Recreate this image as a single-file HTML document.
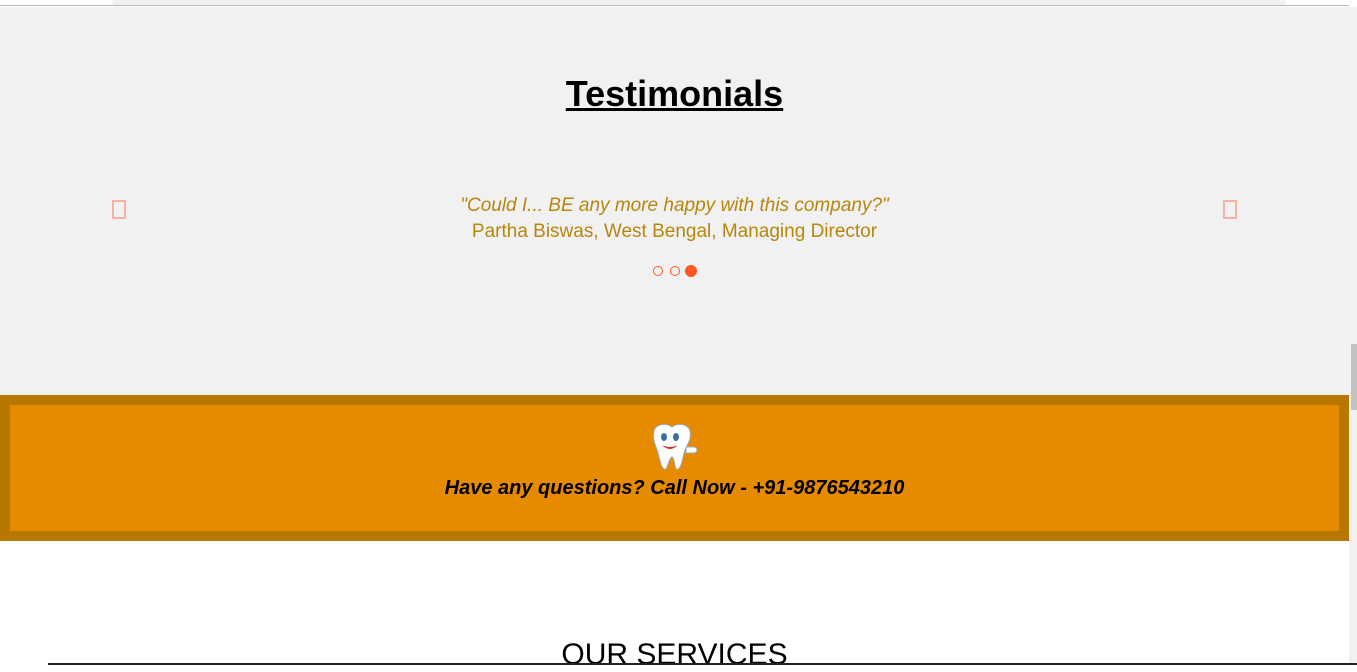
<!DOCTYPE html>
<html><head><style>
*{margin:0;padding:0;box-sizing:border-box}
body{width:1357px;height:665px;overflow:hidden;background:#fff;font-family:"Liberation Sans",Arial,sans-serif;position:relative}
.top{position:absolute;left:0;top:0;width:1349px;height:6px;background:#fff;border-bottom:1px solid #b5b5b5}
.top .bar{position:absolute;left:113px;top:0;width:1172px;height:3px;background:#f2f2f2;box-shadow:0 1px 2px #ddd}
.grey{position:absolute;left:0;top:7px;width:1349px;height:388px;background:#f1f1f1}
h2{position:absolute;left:0;width:1349px;top:73px;text-align:center;font-size:36px;font-weight:bold;text-decoration:underline;color:#000}
.q{position:absolute;left:0;width:1349px;top:195px;text-align:center;font-size:19px;font-style:italic;color:#b8860b}
.n{position:absolute;left:0;width:1349px;top:221px;text-align:center;font-size:19px;color:#b8860b}
.arr{position:absolute;top:200px;width:14px;height:19px;border:2px solid #f5a48e;opacity:.8}
.dot{position:absolute;top:266px;width:10px;height:10px;border:1px solid #ff5722;border-radius:50%}
.band{position:absolute;left:0;top:395px;width:1349px;height:146px;background:#b87800;padding:10px}
.band .in{width:100%;height:100%;background:#e68a00;position:relative}
.call{position:absolute;left:0;width:100%;top:72px;text-align:center;font-size:20px;font-weight:bold;font-style:italic;color:#000}
.svc{position:absolute;left:0;width:1349px;top:638px;text-align:center;font-size:30px;color:#000}
.sb{position:absolute;left:1349px;top:7px;width:8px;height:658px;background:#f1f1f1}
.th{position:absolute;left:1351px;top:344px;width:6px;height:66px;background:#c1c1c1}
.bot{position:absolute;left:48px;top:663px;width:1309px;height:2px;background:#222}
</style></head><body>
<div class="top"><div class="bar"></div></div>
<div class="grey"></div>
<h2>Testimonials</h2>
<div class="arr" style="left:112px"></div>
<div class="arr" style="left:1223px"></div>
<div class="q">"Could I... BE any more happy with this company?"</div>
<div class="n">Partha Biswas, West Bengal, Managing Director</div>
<div class="dot" style="left:653px"></div>
<div class="dot" style="left:670px"></div>
<div class="dot" style="left:685px;width:12px;height:12px;top:265px;background:#ff5722"></div>
<div class="band"><div class="in">
<svg style="position:absolute;left:638px;top:18px" width="54" height="50" viewBox="0 0 54 50">
<path d="M6 8 C8 0 20 0 24 4 C28 0 40 0 42 8 C44 18 38 22 36 30 C34 40 32 48 28 46 C26 40 26 34 24 34 C22 34 20 42 18 46 C14 48 12 38 10 30 C8 22 4 18 6 8Z" fill="#fff" stroke="#9ab" stroke-width="1"/>
<path d="M38 24 h8 a3 3 0 0 1 0 6 h-8z" fill="#fff" stroke="#9ab"/>
<ellipse cx="16" cy="14" rx="3" ry="4" fill="#3a6ea5"/><ellipse cx="28" cy="14" rx="3" ry="4" fill="#3a6ea5"/>
<path d="M14 22 Q22 30 30 22 Q22 26 14 22Z" fill="#c33"/>
</svg>
<div class="call">Have any questions? Call Now - +91-9876543210</div>
</div></div>
<div class="svc">OUR SERVICES</div>
<div class="sb"></div><div class="th"></div>
<div class="bot"></div>
</body></html>
